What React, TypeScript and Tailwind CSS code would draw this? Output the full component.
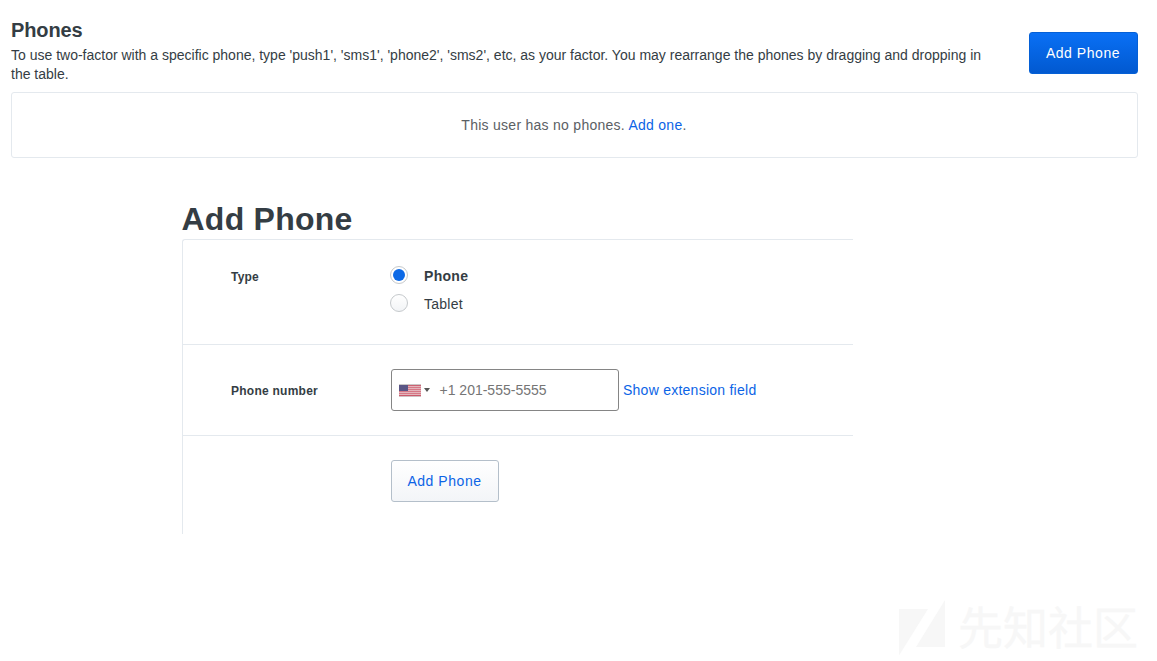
function UsFlag() {
  return (
    <svg width="22" height="13" viewBox="0 0 22 13" className="block" shapeRendering="crispEdges">
      <rect width="22" height="13" fill="#e3b4bb" />
      <rect width="22" height="1" fill="#cbc8c8" />
      <rect y="1" width="22" height="1" fill="#cc6272" />
      <rect y="3" width="22" height="1" fill="#d67886" />
      <rect y="5" width="22" height="1" fill="#d67886" />
      <rect y="7" width="22" height="1" fill="#d67886" />
      <rect y="9" width="22" height="1" fill="#d67886" />
      <rect y="11" width="22" height="1" fill="#cc5a6b" />
      <rect y="12" width="22" height="1" fill="#cfc3c5" />
      <rect y="1" width="9" height="6" fill="#5a5686" />
    </svg>
  );
}

function Radio({ label, checked = false }: { label: string; checked?: boolean }) {
  return (
    <label className="flex h-7 items-center">
      <span
        className={
          checked
            ? 'flex size-[18px] items-center justify-center rounded-full border border-[#c5c9cc] bg-white'
            : 'flex size-[18px] items-center justify-center rounded-full border border-[#c5c9cc] bg-linear-to-b from-white to-[#f2f4f6]'
        }
      >
        {checked && <span className="size-3 rounded-full bg-[#0c69e6]" />}
      </span>
      <span className={checked ? 'ml-4 pt-0.5 font-bold tracking-[0.3px]' : 'ml-4 pt-0.5 tracking-[0.25px]'}>{label}</span>
    </label>
  );
}

function PhonesSection() {
  return (
    <section className="pl-[11px] pr-[19px] pt-[18px]">
      <div className="flex h-[74px] items-start justify-between">
        <div className="w-[990px]">
          <h2 className="text-xl leading-6 font-bold tracking-[-0.1px]">Phones</h2>
          <p className="mt-[4px] text-sm leading-[19px]">
            To use two-factor with a specific phone, type 'push1', 'sms1', 'phone2', 'sms2', etc, as your factor. You may
            rearrange the phones by dragging and dropping in the table.
          </p>
        </div>
        <button className="mt-[14px] h-[42px] w-[109px] rounded-[3px] border border-[#0560d6] bg-linear-to-b from-[#0a70f5] to-[#0259d0] pr-px text-sm tracking-[0.55px] text-white">
          Add Phone
        </button>
      </div>
      <div className="flex h-[66px] items-center justify-center rounded-[3px] border border-[#e4e9ee] pr-px text-sm tracking-[0.27px] text-[#5b6064]">
        <p>
          This user has no phones. <a className="text-[#0c64e6]">Add one</a>.
        </p>
      </div>
    </section>
  );
}

function AddPhoneForm() {
  return (
    <section className="ml-[182px] mt-[41px] w-[671px]">
      <h1 className="-ml-[0.5px] h-10 text-[32px] leading-[41px] font-bold tracking-[0.25px]">Add Phone</h1>
      <form className="h-[295px] rounded-tl-[3px] border-t border-l border-[#e4e9ee] text-sm">
        <div className="flex h-[105px] border-b border-[#e4e9ee] pl-12">
          <span className="w-[159px] pt-7 text-xs leading-[18px] font-bold tracking-[0.2px]">Type</span>
          <div className="pt-[21px]">
            <Radio label="Phone" checked />
            <Radio label="Tablet" />
          </div>
        </div>
        <div className="flex h-[91px] items-center border-b border-[#e4e9ee] pl-12">
          <span className="w-[160px] pt-0.5 text-xs font-bold tracking-[0.25px]">Phone number</span>
          <div className="flex h-[42px] w-[228px] items-center rounded-[3px] border border-[#858585] pl-[7px]">
            <UsFlag />
            <svg width="6" height="4" viewBox="0 0 6 4" className="ml-[3px]">
              <path d="M0 0h6L3 4z" fill="#555" />
            </svg>
            <span className="ml-[9.5px] text-[#757575]">+1 201-555-5555</span>
          </div>
          <a className="ml-1 tracking-[0.25px] text-[#0c64e6]">Show extension field</a>
        </div>
        <div className="pl-52 pt-6">
          <button
            type="button"
            className="h-[42px] w-[108px] rounded-[3px] border border-[#b4bfca] bg-linear-to-b from-white to-[#f3f5f8] pr-px tracking-[0.55px] text-[#0c64e6]"
          >
            Add Phone
          </button>
        </div>
      </form>
    </section>
  );
}

function CommunityMark() {
  return (
    <div className="absolute top-[600px] left-[899px] flex items-start text-[#f7f7f7]">
      <svg width="46" height="56" viewBox="0 0 46 56" fill="currentColor">
        <path d="M0 9H29L0 55.500Z" />
        <path d="M46 0V47H17Z" />
      </svg>
      <span className="ml-[13px] text-[45px] leading-[51px] font-normal whitespace-nowrap [-webkit-text-stroke:0.3px_#f7f7f7] [font-family:'Noto_Sans_CJK_SC',sans-serif]">
        先知社区
      </span>
    </div>
  );
}

export default function App() {
  return (
    <main className="relative h-[661px] w-[1157px] overflow-hidden bg-white text-[#343d44] [font-family:'Liberation_Sans',Arial,sans-serif]">
      <PhonesSection />
      <AddPhoneForm />
      <CommunityMark />
    </main>
  );
}
